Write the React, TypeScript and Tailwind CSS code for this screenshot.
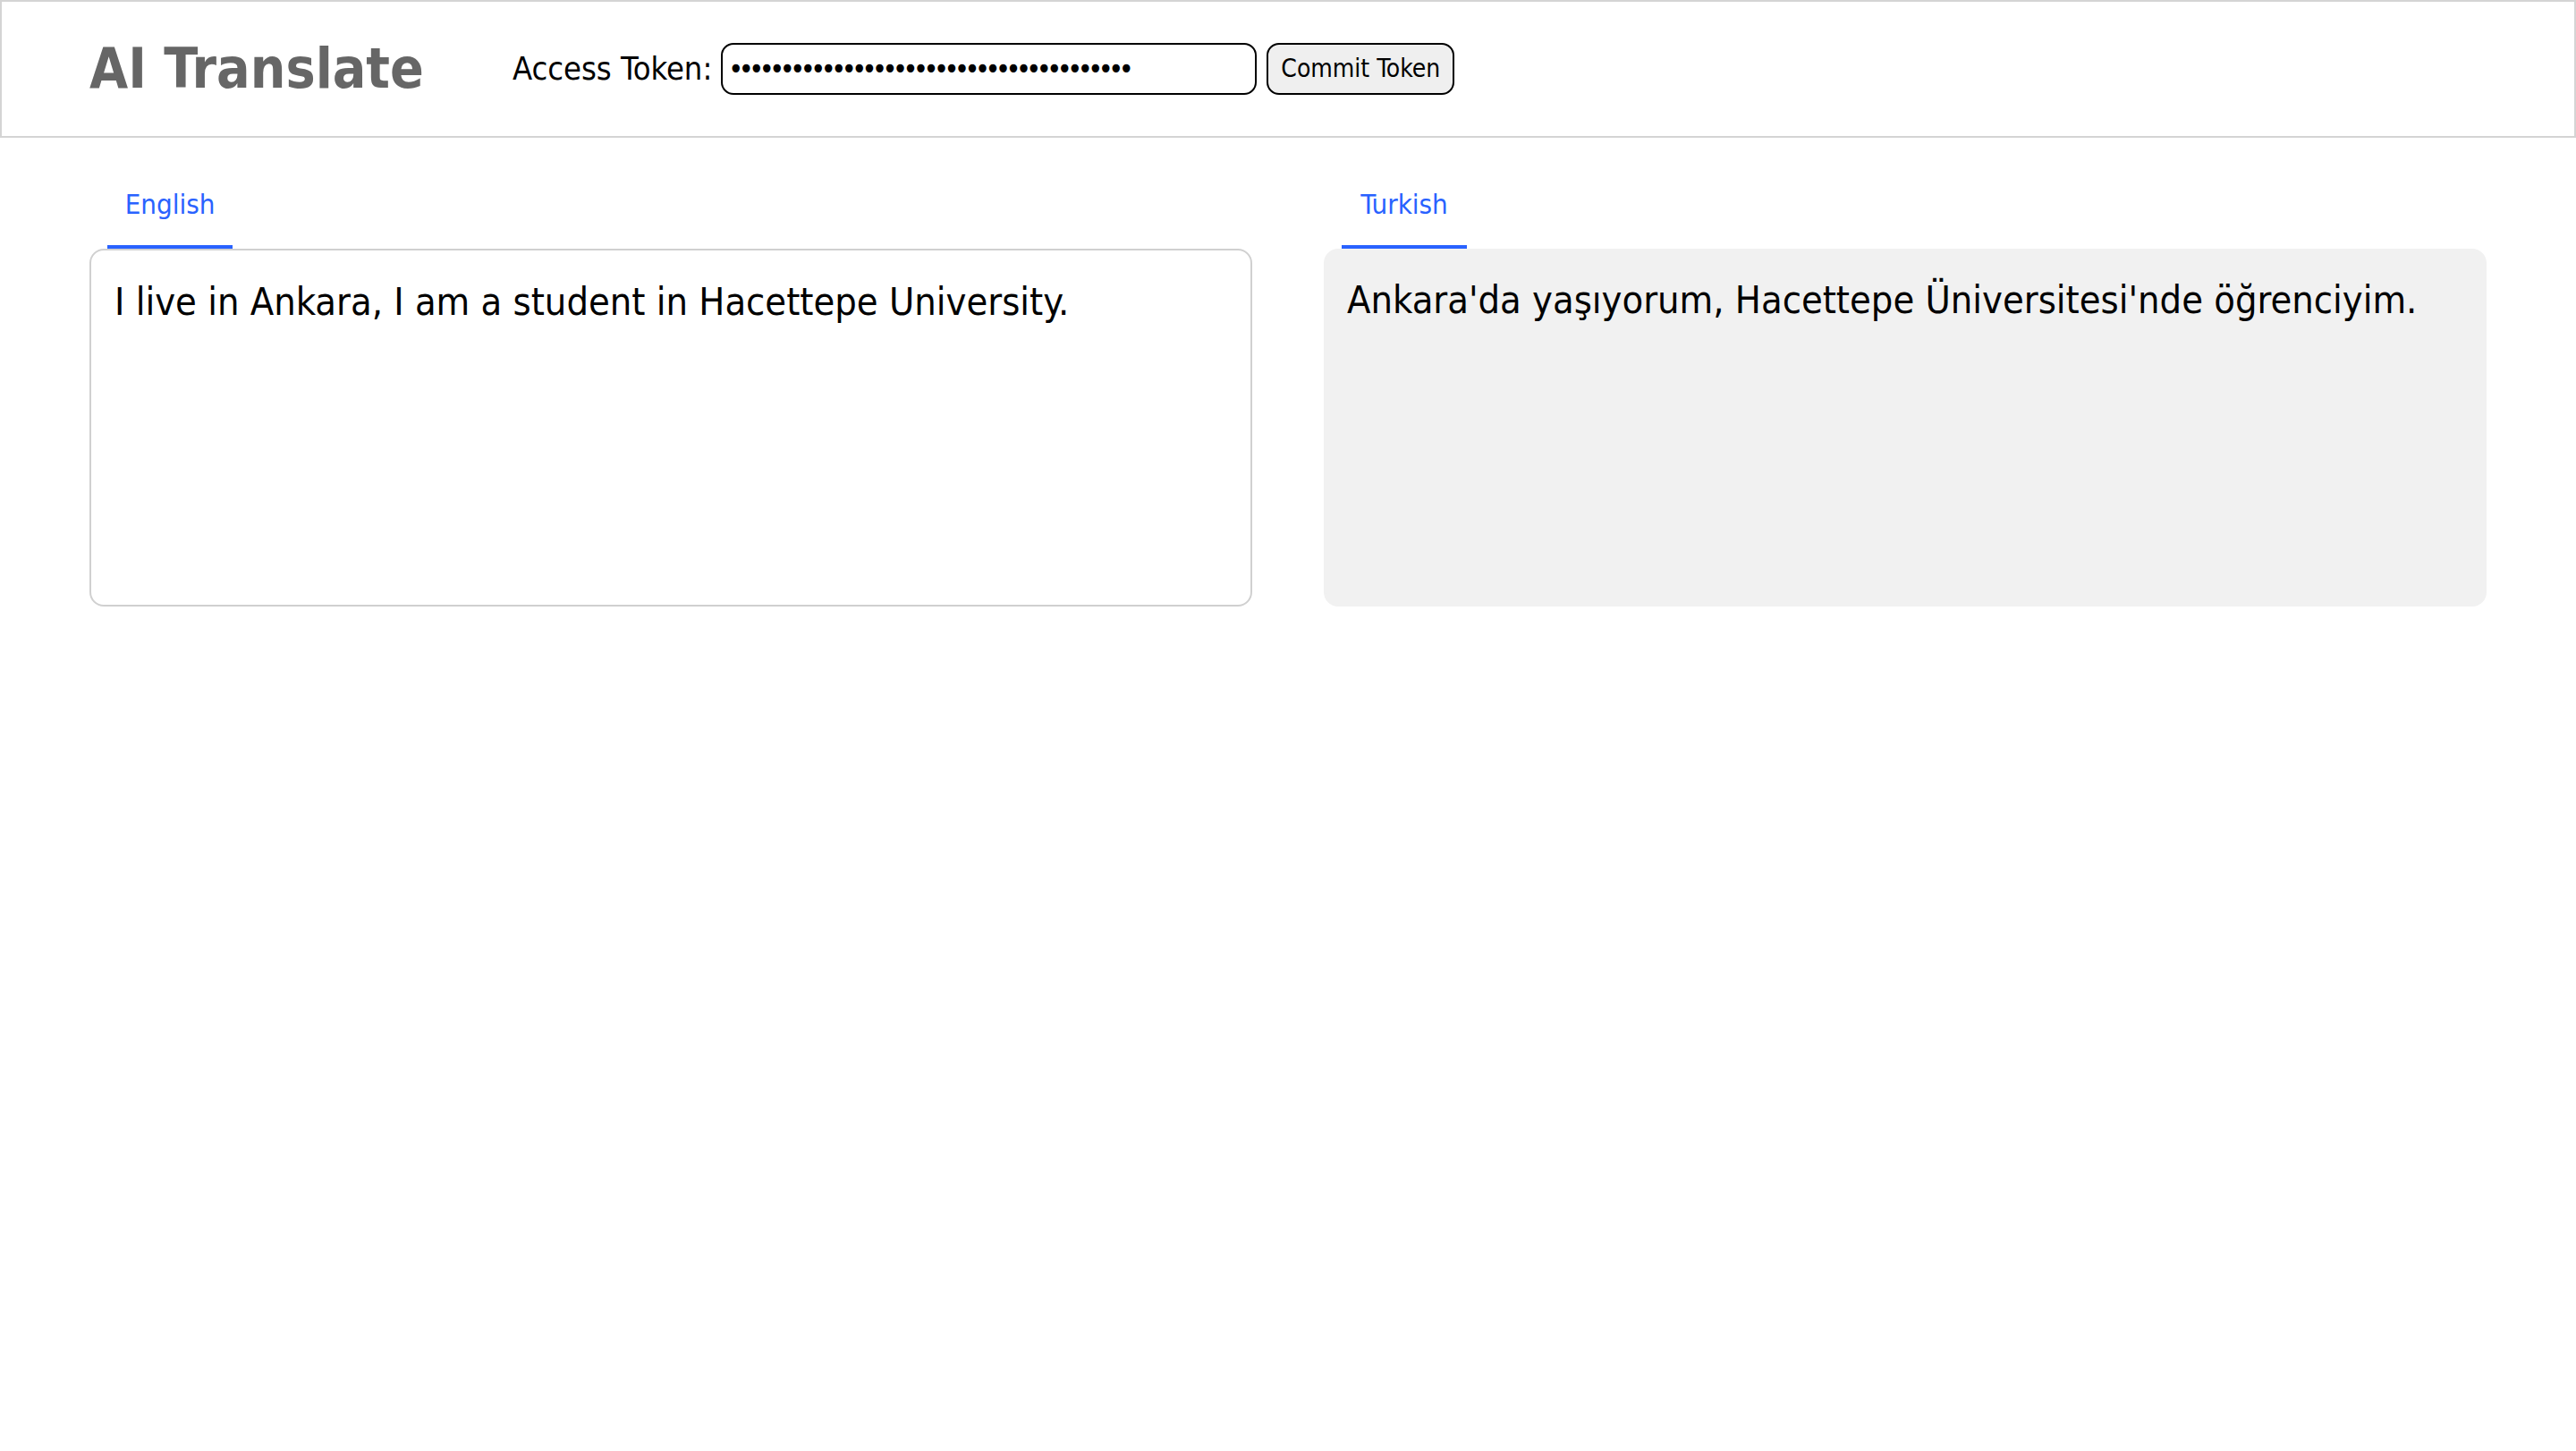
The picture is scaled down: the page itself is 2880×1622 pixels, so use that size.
import React from "react";

const FONT = { fontFamily: '"DejaVu Sans Condensed", "DejaVu Sans", Verdana, sans-serif' };

function Panel({
  label,
  children,
}: {
  label: string;
  children: React.ReactNode;
}) {
  return (
    <div className="flex flex-col w-[1300px]">
      <div className="flex pl-[20px]">
        <div className="w-[140px] h-[91px] pt-[23px] border-b-4 border-[#2962ff] flex justify-center">
          <span className="text-[31px] leading-[36px] text-[#2962ff]">{label}</span>
        </div>
      </div>
      {children}
    </div>
  );
}

export default function App() {
  const token = "•".repeat(39);
  return (
    <div className="min-h-screen bg-white text-black" style={FONT}>
      <header className="h-[154px] border-2 border-[#d4d4d4] flex items-center pl-[98px]">
        <h1 className="text-[62px] leading-none font-bold text-[#666666] m-0">AI Translate</h1>
        <label className="ml-[99px] text-[36px] leading-none text-black">Access Token:</label>
        <input
          type="password"
          readOnly
          value={token}
          className="ml-[10px] w-[599px] h-[58px] border-2 border-black rounded-[14px] pl-[6px] text-[32px] tracking-[-5.5px] text-black bg-white outline-none"
          style={FONT}
        />
        <button
          className="ml-[11px] w-[210px] h-[58px] border-2 border-black rounded-[14px] bg-[#efefef] text-[28px] leading-none text-black"
          style={FONT}
        >
          Commit Token
        </button>
      </header>
      <main className="flex gap-[80px] px-[100px] pt-[33px]">
        <Panel label="English">
          <textarea
            readOnly
            value="I live in Ankara, I am a student in Hacettepe University."
            className="h-[400px] w-full resize-none border-2 border-[#d0d0d0] rounded-[16px] px-[26px] pt-[24px] text-[43px] leading-[66px] text-black bg-white outline-none"
            style={FONT}
          />
        </Panel>
        <Panel label="Turkish">
          <div className="h-[400px] w-full border-2 border-[#f1f1f1] rounded-[16px] px-[24px] pt-[22px] text-[43px] leading-[66px] text-black bg-[#f1f1f1]">
            Ankara'da yaşıyorum, Hacettepe Üniversitesi'nde öğrenciyim.
          </div>
        </Panel>
      </main>
    </div>
  );
}
